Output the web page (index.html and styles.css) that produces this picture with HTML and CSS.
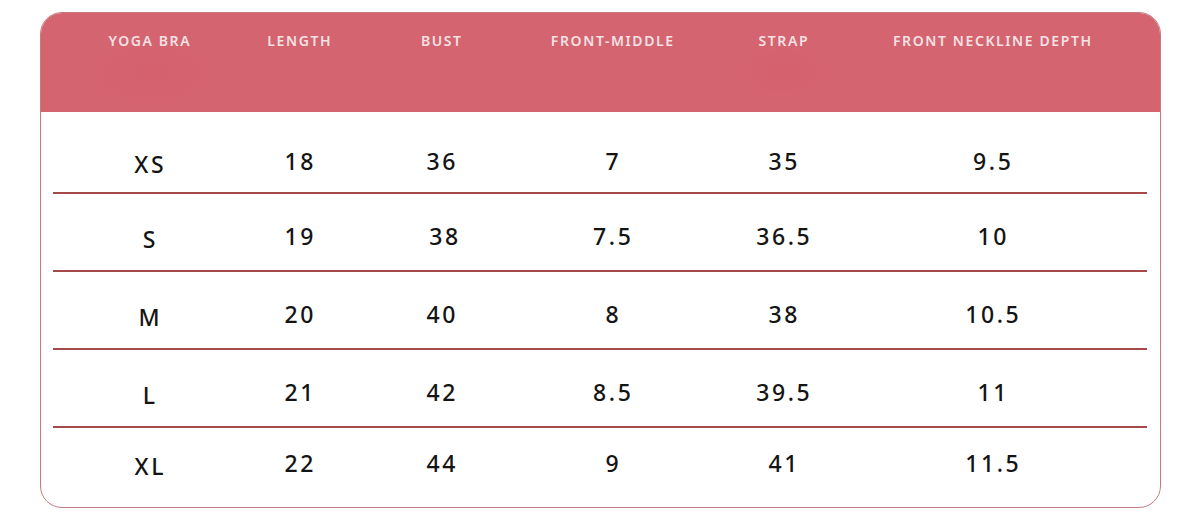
FILE: index.html
```html
<!DOCTYPE html>
<html lang="en">
<head>
<meta charset="utf-8">
<title>Yoga Bra Size Chart</title>
<link rel="stylesheet" href="styles.css">
</head>
<body>
<div class="card">
  <div class="head cols">
    <div>YOGA BRA</div>
    <div>LENGTH</div>
    <div>BUST</div>
    <div>FRONT-MIDDLE</div>
    <div>STRAP</div>
    <div>FRONT NECKLINE DEPTH</div>
  </div>
  <div class="body">
    <div class="row cols first">
      <div class="size">XS</div><div>18</div><div>36</div><div>7</div><div>35</div><div>9.5</div>
    </div>
    <div class="rule"></div>
    <div class="row cols">
      <div class="size">S</div><div>19</div><div class="nudge">38</div><div>7.5</div><div>36.5</div><div>10</div>
    </div>
    <div class="rule"></div>
    <div class="row cols">
      <div class="size">M</div><div>20</div><div>40</div><div>8</div><div>38</div><div>10.5</div>
    </div>
    <div class="rule"></div>
    <div class="row cols">
      <div class="size">L</div><div>21</div><div>42</div><div>8.5</div><div>39.5</div><div>11</div>
    </div>
    <div class="rule"></div>
    <div class="row cols last">
      <div class="size">XL</div><div>22</div><div>44</div><div>9</div><div>41</div><div>11.5</div>
    </div>
  </div>
</div>
</body>
</html>
```

FILE: styles.css
```css
html, body {
  margin: 0;
  padding: 0;
  background: #ffffff;
}

body {
  font-family: "Noto Sans", "Open Sans", "DejaVu Sans", sans-serif;
}

.card {
  box-sizing: border-box;
  margin: 12px 0 0 40px;
  width: 1121px;
  height: 496px;
  border: 1.5px solid #c47c80;
  border-radius: 22px;
  overflow: hidden;
  background: #ffffff;
}

.cols {
  display: grid;
  grid-template-columns: 216px 84px 200px 142px 200px 218px;
  text-align: center;
  white-space: nowrap;
}

.head {
  box-sizing: border-box;
  height: 98.5px;
  padding-top: 18px;
  background:
    radial-gradient(ellipse 60px 30px at 110px 60px, rgba(220, 80, 110, 0.18), transparent),
    radial-gradient(ellipse 40px 24px at 742px 58px, rgba(220, 80, 110, 0.2), transparent),
    #d4646f;
  color: #f4e1e4;
  font-size: 14px;
  font-weight: 600;
  letter-spacing: 1.6px;
  line-height: 20px;
}

.head > div {
  padding-left: 1.6px;
}

.body {
  padding-top: 4px;
}

.row {
  box-sizing: border-box;
  height: 76px;
  padding-top: 27px;
  font-size: 23px;
  font-weight: 500;
  line-height: 30px;
  letter-spacing: 2.6px;
  color: #141414;
}

.row > div {
  padding-left: 2.6px;
}

.row.first {
  padding-top: 30px;
}

.row.last {
  padding-top: 20px;
}

.row > .size {
  padding-top: 3px;
}

.row > .nudge {
  padding-left: 8px;
}

.rule {
  height: 2px;
  margin: 0 13px 0 12px;
  background: #a5484a;
}
```
